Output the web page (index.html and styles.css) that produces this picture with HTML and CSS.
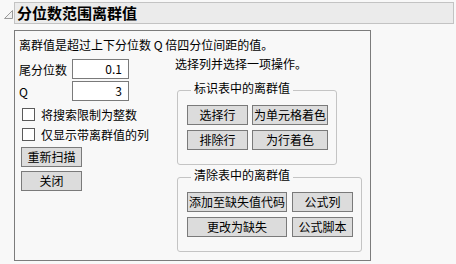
FILE: index.html
```html
<!DOCTYPE html>
<html lang="zh-CN">
<head>
<meta charset="utf-8">
<title>分位数范围离群值</title>
<link rel="stylesheet" href="styles.css">
</head>
<body>
<div class="header">
  <div class="disclosure">
    <svg width="14" height="22" viewBox="0 0 14 22"><path d="M12.5 8.5 L12.5 16.5 L4.5 16.5 Z" fill="#f2f2f2" stroke="#9a9a9a" stroke-width="1"/></svg>
  </div>
  <div class="title-box">分位数范围离群值</div>
</div>
<div class="panel">
  <div class="intro">离群值是超过上下分位数 Q 倍四分位间距的值。</div>
  <div class="columns">
    <div class="left">
      <div class="field-row"><span class="label">尾分位数</span><span class="input">0.1</span></div>
      <div class="field-row gap2"><span class="label">Q</span><span class="input">3</span></div>
      <div class="check-row first"><span class="box"></span><span>将搜索限制为整数</span></div>
      <div class="check-row"><span class="box"></span><span>仅显示带离群值的列</span></div>
      <div class="btn left-btn rescan">重新扫描</div>
      <div class="btn left-btn close">关闭</div>
    </div>
    <div class="right">
      <div class="hint">选择列并选择一项操作。</div>
      <fieldset class="group group-mark">
        <legend>标识表中的离群值</legend>
        <div class="grid grid-mark">
          <div class="btn">选择行</div>
          <div class="btn">为单元格着色</div>
          <div class="btn">排除行</div>
          <div class="btn">为行着色</div>
        </div>
      </fieldset>
      <fieldset class="group group-clear">
        <legend>清除表中的离群值</legend>
        <div class="grid grid-clear">
          <div class="btn">添加至缺失值代码</div>
          <div class="btn">公式列</div>
          <div class="btn">更改为缺失</div>
          <div class="btn">公式脚本</div>
        </div>
      </fieldset>
    </div>
  </div>
</div>
</body>
</html>
```
FILE: styles.css
```css
html, body {
  margin: 0;
  padding: 0;
}
body {
  width: 456px;
  height: 264px;
  overflow: hidden;
  background: #f8f8f8;
  font-family: "Noto Sans CJK SC", "Noto Sans", sans-serif;
  font-size: 12px;
  color: #000;
}
.header {
  display: flex;
  padding-top: 2px;
}
.disclosure {
  width: 14px;
  height: 22px;
}
.disclosure svg {
  display: block;
}
.title-box {
  flex: 1;
  margin-right: 2px;
  height: 22px;
  box-sizing: border-box;
  border: 1px solid #c3c3c3;
  background: #ebebeb;
  padding-left: 2px;
  font-weight: bold;
  font-size: 15px;
  line-height: 20px;
}
.panel {
  margin: 6px 0 0 14px;
  width: 357px;
  height: 231px;
  box-sizing: border-box;
  border: 1px solid #7c7c7c;
  padding: 6px 0 0 4px;
}
.intro {
  line-height: 16px;
  height: 16px;
  white-space: nowrap;
}
.columns {
  display: flex;
}
.left {
  width: 110px;
  flex: none;
  margin-top: 6px;
  display: flex;
  flex-direction: column;
}
.field-row {
  display: flex;
  align-items: center;
  height: 20px;
}
.field-row.gap2 {
  margin-top: 2px;
}
.label {
  width: 53px;
  flex: none;
}
.input {
  flex: none;
  width: 57px;
  height: 20px;
  box-sizing: border-box;
  border: 1px solid #7a7a7a;
  background: #fff;
  text-align: right;
  padding-right: 6px;
  line-height: 18px;
}
.check-row {
  display: flex;
  align-items: center;
  height: 20px;
  white-space: nowrap;
}
.check-row.first {
  margin-top: 3px;
}
.box {
  flex: none;
  width: 13px;
  height: 13px;
  box-sizing: border-box;
  border: 1px solid #5a5a5a;
  background: #fff;
  margin-left: 3px;
  margin-right: 6px;
}
.btn {
  height: 20px;
  box-sizing: border-box;
  border: 1px solid #7a7a7a;
  background: #dcdcdc;
  line-height: 18px;
  text-align: center;
  white-space: nowrap;
}
.left-btn {
  width: 61px;
  margin-left: 2px;
}
.rescan {
  margin-top: 3px;
}
.close {
  margin-top: 4px;
}
.right {
  margin-left: 46px;
  margin-top: 3px;
  display: flex;
  flex-direction: column;
  align-items: flex-start;
}
.hint {
  line-height: 16px;
  white-space: nowrap;
}
.group {
  margin: 0 0 0 2px;
  border: 1px solid #c4c4c4;
  border-radius: 3px;
  padding: 5px 8px 14px 9px;
  min-width: 0;
}
.group-mark {
  margin-top: 8px;
}
.group-clear {
  margin-top: 2px;
}
.group legend {
  margin-left: 4px;
  padding: 0 3px 4px 3px;
  line-height: 16px;
}
.grid {
  display: grid;
  row-gap: 5px;
}
.grid-mark {
  grid-template-columns: 61px 76px;
  column-gap: 4px;
}
.grid-clear {
  grid-template-columns: 100px 61px;
  column-gap: 5px;
}
```
